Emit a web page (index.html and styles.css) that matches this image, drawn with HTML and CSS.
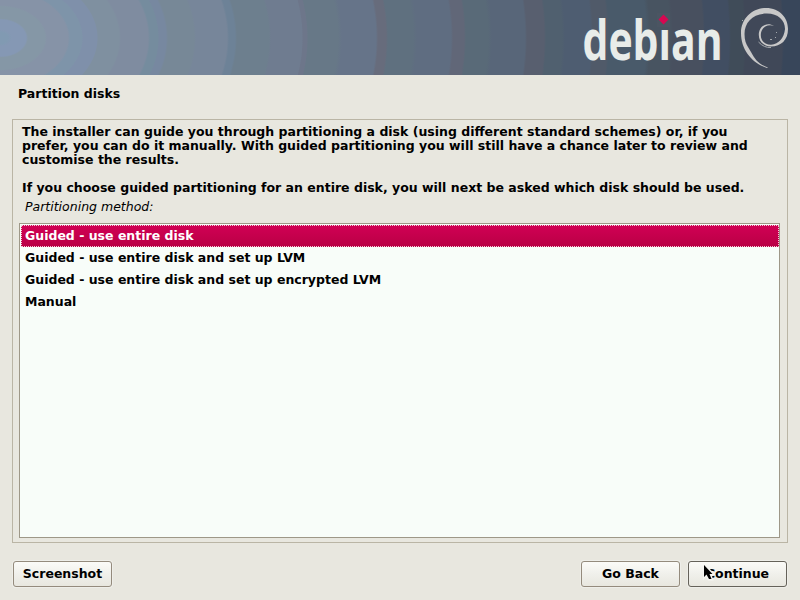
FILE: index.html
```html
<!DOCTYPE html>
<html lang="en">
<head>
<meta charset="utf-8">
<title>Debian installer</title>
<link rel="stylesheet" href="styles.css">
</head>
<body>
<header class="banner">
<svg class="brand" width="230" height="75" viewBox="570 0 230 75">
<text class="wordmark" transform="translate(582.500 60) scale(.73 1)" textLength="192" lengthAdjust="spacingAndGlyphs">debian</text>
<path fill="#4b5562" d="M657 13H670V27H657Z"/>
<path fill="#d70751" d="M663.500 14.500L668.500 19.500L663.500 24.500L658.500 19.500Z"/>
<path fill="#c8c8c8" d="M767 68C752 63 741 50 741 33C741 18 753 8 766 8C780 8 788 18 788 29C788 40 781 46.500 771 46.500C763 46 758.800 41 758.800 35C758.800 26 767 21.500 774 26C767 23.500 760.800 28 760.800 35C760.800 41 765 44.800 771 44.800C779 44 784 38 785 29C785 20 778 13.500 767 13.500C753 13.500 744.500 22 744.500 34C744.500 40 746 44 748 47L751 52C755 60 760 65 768 67.500Z"/>
<path stroke="#a5a9ad" fill="none" d="M758.500 42Q764 48 771 47.500M770 39.500h2M776 32.500h1M775 37.500h1M742 20.500h1"/>
</svg>
</header>
<main>
<h1>Partition disks</h1>
<section class="panel">
<p>The installer can guide you through partitioning a disk (using different standard schemes) or, if you<br>prefer, you can do it manually. With guided partitioning you will still have a chance later to review and<br>customise the results.</p>
<p>If you choose guided partitioning for an entire disk, you will next be asked which disk should be used.</p>
<div class="label">Partitioning method:</div>
<ul class="list">
<li class="selected">Guided - use entire disk</li>
<li>Guided - use entire disk and set up LVM</li>
<li>Guided - use entire disk and set up encrypted LVM</li>
<li>Manual</li>
</ul>
</section>
<footer class="actions">
<button>Screenshot</button>
<button class="back">Go Back</button>
<button class="focus">Continue</button>
</footer>
</main>
<svg class="cursor" width="14" height="18" viewBox="0 0 14 18"><path stroke="#f5f5f1" stroke-width="3" paint-order="stroke" d="M1 0V12L3.500 9.500L6 14H8.500L6.500 9H9.500Z"/></svg>
</body>
</html>
```
FILE: styles.css
```css
* { box-sizing: border-box; }
body { margin: 0; width: 800px; height: 600px; overflow: hidden; background: #e8e7df; color: #000; font: bold 12.5px/14px "DejaVu Sans", sans-serif; }
.banner { height: 75px; display: flex; justify-content: flex-end; background: radial-gradient(800px 560px at 0 38px, #819ab2 8px, #8598b4 12px 26px, #8597a6 28px 45px, #8693a7 47px 68px, #7e94a9 70px 82px, #7f90aa 83px 97px, #7f90a0 98px 119px, #7f8ca0 121px 148px, #758c9e 150px 158px, #7788a0 159px 166px, #778897 168px 194px, #77869a 196px 227px, #6d8297 229px 235px, #6d7f8e 237px 269px, #6f7c90 271px 302px, #6d768a 303px 307px, #677887 308px 338px, #667489 342px 376px, #676c7c 378px 386px, #5f707f 388px 413px, #5f6d81 417px 451px, #616778 453px 464px, #596a78 466px 488px, #586679 492px 525px, #585f6f 527px 544px, #50606f 546px 562px, #4e5d71 565px 591px, #505a69 593px 607px, #495a6a 609px 646px, #485461 650px 670px, #48505f 673px 703px, #414e62 705px 729px, #404c59 731px 744px, #404858 746px 782px, #38465a 784px); }
.brand { display: block; overflow: visible; }
.wordmark { font: 700 56px "Open Sans", sans-serif; fill: #e8ece9; }
main { height: 525px; padding: 0 12px; display: flex; flex-direction: column; }
h1 { margin: 12px 0 18px 6px; font-size: 12.5px; line-height: 14px; }
.panel { height: 424px; border: 1px solid #bab5a5; padding: 5px 7px 4px 6px; display: flex; flex-direction: column; }
p { margin: 0 0 14px 3px; white-space: nowrap; }
p + p { margin-bottom: 4px; }
.label { margin: 1px 0 9px 6px; font-weight: normal; font-style: italic; }
.list { flex: 1; margin: 0; padding: 1px 0 1px 1px; list-style: none; background: #f8fdf9; border: 1px solid #9e9888; }
.list li { height: 22px; padding: 0 4px; line-height: 22px; }
.list .selected { color: #fff; background: linear-gradient(#d10055, #b90044); outline: 1px dotted #f3cad8; outline-offset: -1px; }
.actions { display: flex; gap: 8px; margin-top: 18px; padding: 0 1px; }
button { width: 99px; height: 26px; padding: 0 0 2px; font: bold 12.5px "DejaVu Sans", sans-serif; color: #000; border: 1px solid #948b7d; border-radius: 3px; background: linear-gradient(#fbfbf8, #f0f0eb 50%, #e8e7df); box-shadow: 0 0 0 1px #eeeee9; }
.back { margin-left: auto; }
.focus { border-color: #65625a; }
.cursor { position: absolute; left: 703px; top: 565px; }
```
